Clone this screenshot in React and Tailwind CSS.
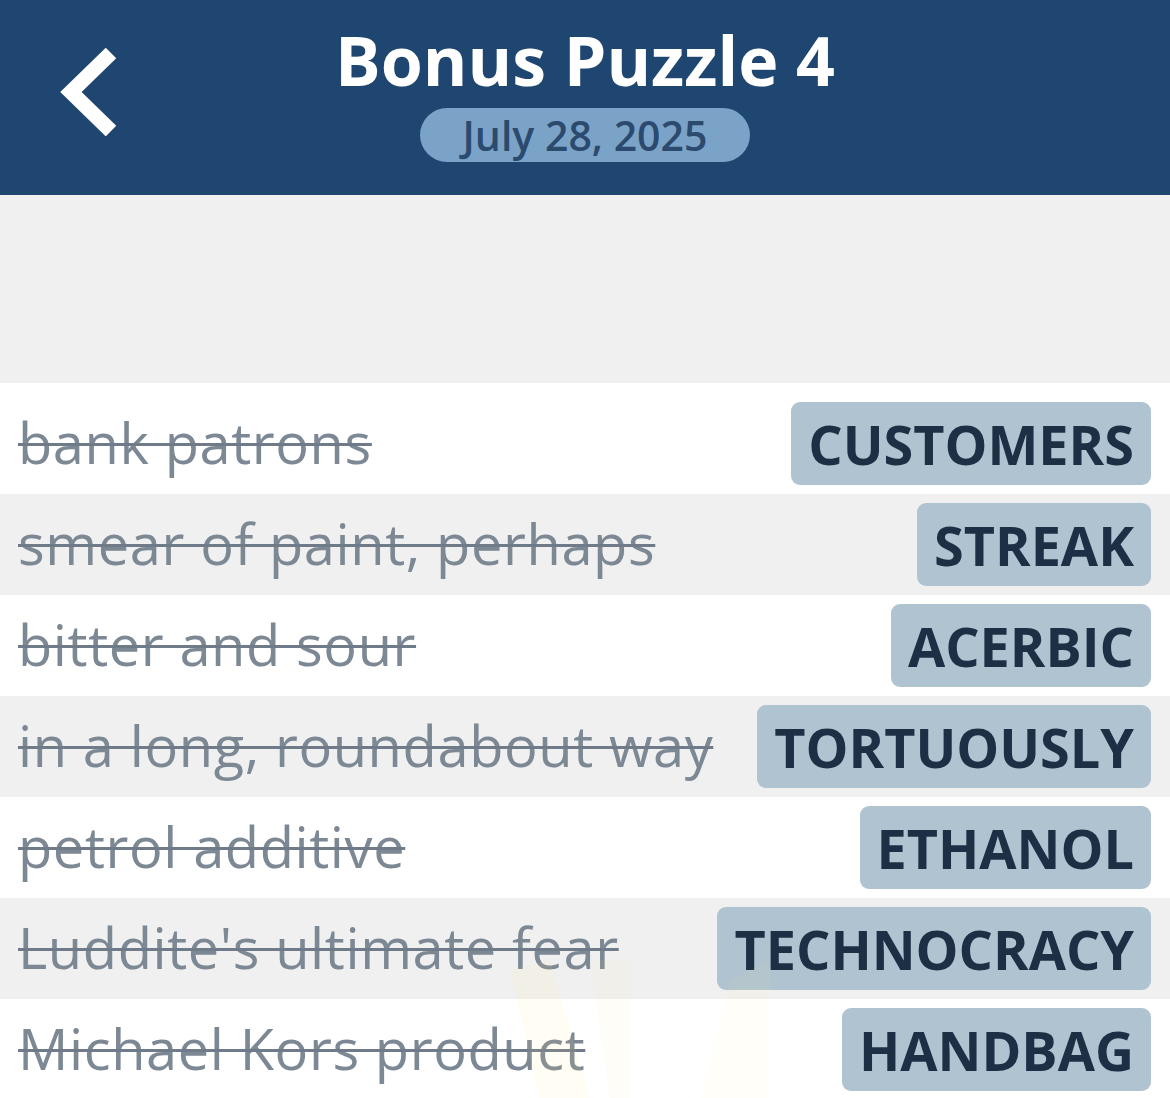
import React from 'react';

const clues = [
  { clue: 'bank patrons', answer: 'CUSTOMERS' },
  { clue: 'smear of paint, perhaps', answer: 'STREAK' },
  { clue: 'bitter and sour', answer: 'ACERBIC' },
  { clue: 'in a long, roundabout way', answer: 'TORTUOUSLY' },
  { clue: 'petrol additive', answer: 'ETHANOL' },
  { clue: "Luddite's ultimate fear", answer: 'TECHNOCRACY' },
  { clue: 'Michael Kors product', answer: 'HANDBAG' },
];

const font = { fontFamily: '"Open Sans", "Noto Sans", sans-serif' };

const App = () => {
  return (
    <div className="w-[1170px] h-[1098px] overflow-hidden bg-white relative" style={font}>
      {/* Header */}
      <div className="h-[195px] bg-[#1f4670] relative flex flex-col items-center">
        <button className="absolute left-[58px] top-[46px] w-[62px] h-[90px] flex items-center justify-center">
          <svg width="62" height="90" viewBox="0 0 62 90" fill="none">
            <path d="M53 7 L13 46 L53 85" stroke="white" strokeWidth="15" strokeLinejoin="miter" />
          </svg>
        </button>
        <h1 className="text-white font-bold text-[68px] leading-none mt-[26px]">Bonus Puzzle 4</h1>
        <div className="mt-[14px] w-[330px] h-[54px] rounded-full bg-[#7aa3c7] flex items-center justify-center">
          <span className="text-[#2b4a6e] font-semibold text-[41px] leading-none">July 28, 2025</span>
        </div>
      </div>

      {/* Empty area */}
      <div className="h-[188px] bg-[#f0f0f0]"></div>

      {/* Clue list */}
      <div className="pt-[10px]">
        {clues.map((item, i) => (
          <div
            key={item.clue}
            className={`h-[101px] flex items-center justify-between pl-[18px] pr-[19px] ${
              i % 2 === 1 ? 'bg-[#f0f0f0]' : 'bg-white'
            }`}
          >
            <span className="text-[#7d8895] text-[56px] leading-none line-through decoration-[3px] decoration-[#6f7b88] tracking-[0.6px] -mt-[4px]">
              {item.clue}
            </span>
            <span className="h-[83px] px-[17px] rounded-[9px] bg-[#b0c3d0] text-[#1c2f44] font-bold text-[54px] leading-none flex items-center">
              {item.answer}
            </span>
          </div>
        ))}
      </div>

      {/* faint watermark */}
      <svg className="absolute left-[470px] top-[960px] pointer-events-none" width="300" height="140" viewBox="0 0 300 140">
        <polygon points="40,10 80,0 120,140 70,140" fill="#fde68a" opacity="0.09" />
        <polygon points="120,0 160,0 160,140 140,140" fill="#fde68a" opacity="0.07" />
        <polygon points="260,20 300,0 300,140 230,140" fill="#fde68a" opacity="0.06" />
      </svg>
    </div>
  );
};

export default App;
